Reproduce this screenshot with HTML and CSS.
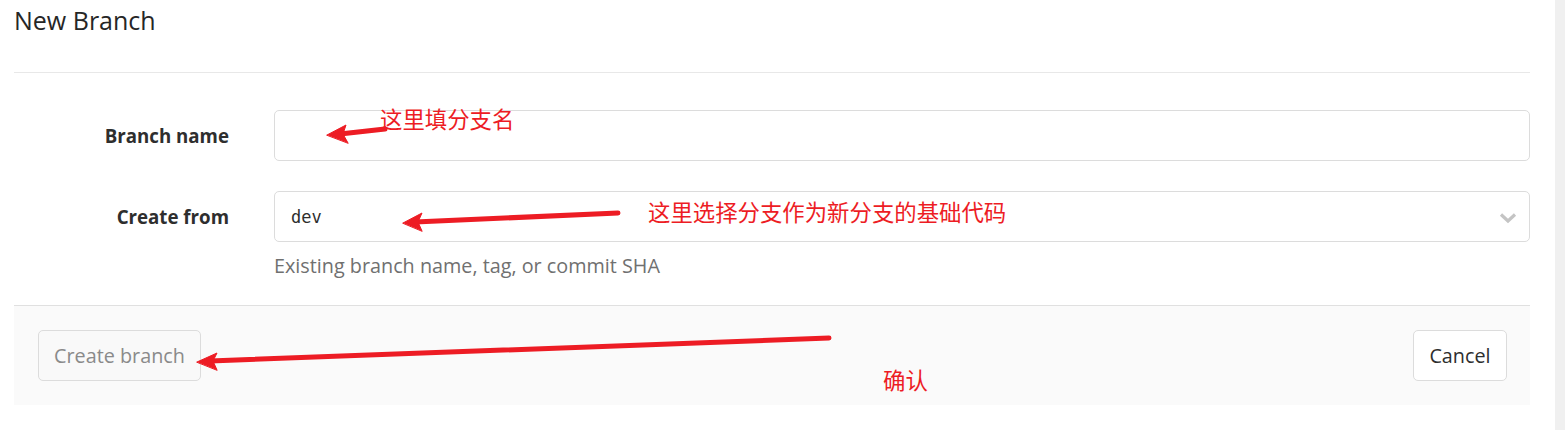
FILE: index.html
```html
<!DOCTYPE html>
<html lang="zh-CN">
<head>
<meta charset="utf-8">
<title>New Branch</title>
<link rel="stylesheet" href="styles.css">
</head>
<body>
<div class="page">
  <main class="content">
    <h3 class="page-title">New Branch</h3>
    <form class="branch-form">
      <div class="form-body">
        <div class="form-row">
          <label class="form-label">Branch name</label>
          <div class="form-field">
            <div class="text-input"></div>
          </div>
        </div>
        <div class="form-row">
          <label class="form-label">Create from</label>
          <div class="form-field">
            <div class="select-input">
              <span class="select-value">dev</span>
              <svg class="chevron" width="18" height="12" viewBox="0 0 18 12"><path d="M2 2.5 L9 9 L16 2.5" fill="none" stroke="#c4c4c4" stroke-width="3.2" stroke-linecap="butt"/></svg>
            </div>
            <div class="help-text">Existing branch name, tag, or commit SHA</div>
          </div>
        </div>
      </div>
      <div class="form-actions">
        <button type="button" class="btn btn-create" disabled>Create branch</button>
        <button type="button" class="btn btn-cancel">Cancel</button>
      </div>
    </form>
  </main>
  <div class="scroll-strip"></div>
</div>

<div class="annotations">
  <svg class="arrows" width="1565" height="430" viewBox="0 0 1565 430">
    <g fill="#ed1c24" stroke="#ed1c24" stroke-linecap="round" stroke-linejoin="round">
      <line x1="385" y1="129" x2="340" y2="134" stroke-width="5"/>
      <polygon points="327,135 346,125 343,134 348,143" stroke-width="1"/>
      <line x1="618" y1="213" x2="415" y2="222" stroke-width="5"/>
      <polygon points="403,223 422,213 418,222 422,231" stroke-width="1"/>
      <line x1="829" y1="338" x2="210" y2="361" stroke-width="5"/>
      <polygon points="197,362 217,353 213,361 217,370" stroke-width="1"/>
    </g>
  </svg>
  <span class="note note-1">这里填分支名</span>
  <span class="note note-2">这里选择分支作为新分支的基础代码</span>
  <span class="note note-3">确认</span>
</div>
</body>
</html>
```

FILE: styles.css
```css
html, body {
  margin: 0;
  padding: 0;
  background: #ffffff;
}

body {
  font-family: "Open Sans", "Noto Sans", "Liberation Sans", sans-serif;
  color: #2e2e2e;
  width: 1565px;
  height: 430px;
  overflow: hidden;
  position: relative;
}

.page {
  display: flex;
  height: 430px;
}

.content {
  width: 1516px;
  margin-left: 14px;
}

.scroll-strip {
  width: 10px;
  margin-left: auto;
  background: #f0f0f0;
  height: 430px;
}

.page-title {
  margin: 0;
  font-size: 25px;
  font-weight: 500;
  line-height: 30px;
  padding-top: 5px;
  border-bottom: 1px solid #e8e8e8;
  box-sizing: border-box;
  height: 73px;
  color: #262626;
}

.form-body {
  padding-top: 37px;
  display: flex;
  flex-direction: column;
  gap: 30px;
  padding-bottom: 26px;
}

.form-row {
  display: grid;
  grid-template-columns: 260px 1fr;
  align-items: start;
}

.form-label {
  font-weight: 700;
  font-size: 18.7px;
  text-align: right;
  padding-right: 45px;
  line-height: 51px;
  height: 51px;
}

.text-input,
.select-input {
  height: 51px;
  border: 1px solid #dcdcdc;
  border-radius: 5px;
  box-sizing: border-box;
  background: #fff;
}

.select-input {
  display: flex;
  align-items: center;
  padding: 0 12px 0 16px;
}

.select-value {
  font-family: "DejaVu Sans Mono", "Liberation Mono", monospace;
  font-size: 17px;
  color: #2e2e2e;
}

.chevron {
  margin-left: auto;
  margin-top: 3px;
}

.help-text {
  margin-top: 11px;
  font-size: 19.8px;
  color: #707070;
  line-height: 26px;
}

.form-actions {
  background: #fafafa;
  border-top: 1px solid #e0e0e0;
  height: 100px;
  box-sizing: border-box;
  display: flex;
  justify-content: space-between;
  align-items: flex-start;
  padding: 24px 23px 0 24px;
}

.btn {
  font-family: "Open Sans", "Noto Sans", "Liberation Sans", sans-serif;
  font-size: 19.8px;
  height: 51px;
  border-radius: 5px;
  border: 1px solid #dcdcdc;
  padding: 0;
  box-sizing: border-box;
}

.btn-create {
  background: #f9f9f9;
  color: #8a8a8a;
  width: 163px;
}

.btn-cancel {
  background: #ffffff;
  color: #2e2e2e;
  width: 94px;
}

.annotations {
  position: absolute;
  left: 0;
  top: 0;
  width: 1565px;
  height: 430px;
  pointer-events: none;
}

.arrows {
  position: absolute;
  left: 0;
  top: 0;
}

.note {
  position: absolute;
  font-family: "Noto Sans CJK SC", sans-serif;
  font-size: 22.4px;
  line-height: 26px;
  color: #ed1c24;
  white-space: nowrap;
}

.note-1 { left: 380px; top: 105px; }
.note-2 { left: 648px; top: 198px; }
.note-3 { left: 883px; top: 366px; }
```
